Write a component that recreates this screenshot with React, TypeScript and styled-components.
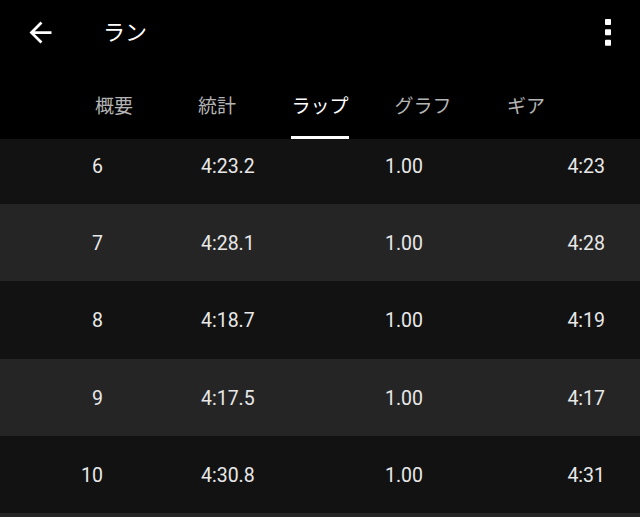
import React from "react";
import styled, { createGlobalStyle } from "styled-components";

const GlobalStyle = createGlobalStyle`
  html, body {
    margin: 0;
    padding: 0;
    background: #000;
    width: 640px;
    height: 517px;
    overflow: hidden;
  }
  * { box-sizing: border-box; }
`;

const Screen = styled.div`
  width: 640px;
  height: 517px;
  display: flex;
  flex-direction: column;
  background: #000;
  color: #fff;
  font-family: Roboto, "Noto Sans CJK JP", sans-serif;
  overflow: hidden;
`;

const Toolbar = styled.div`
  height: 64px;
  display: flex;
  align-items: center;
  padding: 0 0 0 23px;
`;

const IconButton = styled.button`
  background: none;
  border: none;
  padding: 0;
  width: 34px;
  height: 34px;
  display: flex;
  align-items: center;
  justify-content: center;
  color: #fff;
`;

const Title = styled.div`
  margin-left: 46px;
  margin-bottom: 5px;
  font-family: "Noto Sans CJK JP", sans-serif;
  font-size: 22px;
  line-height: 30px;
  color: #fff;
  flex: 1;
`;

const MenuButton = styled(IconButton)`
  width: 30px;
  margin-right: 17px;
`;

const Tabs = styled.div`
  height: 75px;
  display: flex;
  justify-content: center;
`;

const Tab = styled.div`
  width: 103px;
  display: flex;
  align-items: flex-end;
  justify-content: center;
`;

const TabLabel = styled.span<{ $active?: boolean }>`
  font-family: "Noto Sans CJK JP", sans-serif;
  font-size: 19px;
  line-height: 26px;
  padding-bottom: 18px;
  border-bottom: 3px solid ${(p) => (p.$active ? "#ffffff" : "transparent")};
  color: ${(p) => (p.$active ? "#ffffff" : "#b4b4b4")};
`;

const Content = styled.div`
  flex: 1;
  overflow: hidden;
  background: #252525;
`;

const List = styled.div`
  margin-top: -12.25px;
`;

const Row = styled.div<{ $alt: boolean }>`
  height: 77.25px;
  display: grid;
  grid-template-columns: 103px 86px 1fr auto;
  column-gap: 98px;
  align-items: center;
  padding: 2px 35px 0 0;
  background: ${(p) => (p.$alt ? "#252525" : "#121212")};
  font-size: 19.5px;
  color: #e8e8e8;
`;

const Num = styled.span`
  text-align: right;
`;

const Cell = styled.span``;

const Pace = styled.span`
  text-align: right;
`;

const laps = [
  { n: 6, t: "4:23.2", d: "1.00", p: "4:23" },
  { n: 7, t: "4:28.1", d: "1.00", p: "4:28" },
  { n: 8, t: "4:18.7", d: "1.00", p: "4:19" },
  { n: 9, t: "4:17.5", d: "1.00", p: "4:17" },
  { n: 10, t: "4:30.8", d: "1.00", p: "4:31" },
];

const tabs = ["概要", "統計", "ラップ", "グラフ", "ギア"];

export default function App() {
  return (
    <>
      <GlobalStyle />
      <Screen>
        <Toolbar>
          <IconButton aria-label="back">
            <svg width="33" height="33" viewBox="0 0 24 24" fill="#fff">
              <path d="M20 11H7.83l5.59-5.59L12 4l-8 8 8 8 1.41-1.41L7.83 13H20v-2z" />
            </svg>
          </IconButton>
          <Title>ラン</Title>
          <MenuButton aria-label="menu">
            <svg width="8" height="30" viewBox="0 0 8 30" fill="#fff">
              <rect x="1" y="2" width="6" height="6" rx="0.8" />
              <rect x="1" y="12.3" width="6" height="6" rx="0.8" />
              <rect x="1" y="22.8" width="6" height="6" rx="0.8" />
            </svg>
          </MenuButton>
        </Toolbar>
        <Tabs>
          {tabs.map((t) => (
            <Tab key={t}>
              <TabLabel $active={t === "ラップ"}>{t}</TabLabel>
            </Tab>
          ))}
        </Tabs>
        <Content>
          <List>
            {laps.map((l, i) => (
              <Row key={l.n} $alt={i % 2 === 1}>
                <Num>{l.n}</Num>
                <Cell>{l.t}</Cell>
                <Cell>{l.d}</Cell>
                <Pace>{l.p}</Pace>
              </Row>
            ))}
          </List>
        </Content>
      </Screen>
    </>
  );
}
